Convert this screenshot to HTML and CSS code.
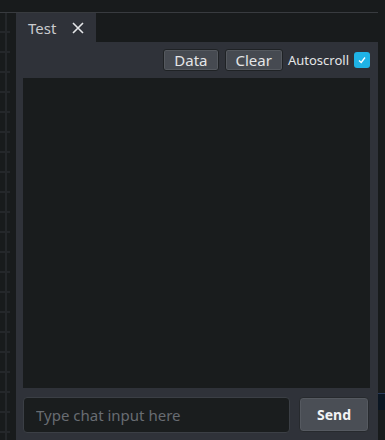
FILE: index.html
```html
<!DOCTYPE html>
<html lang="en">
<head>
    <meta charset="UTF-8">
    <meta name="viewport" content="width=device-width, initial-scale=1.0">
    <title>Test</title>
    <link rel="stylesheet" href="styles.css">
</head>
<body>
    <div class="topline"></div>
    <div class="workspace">
        <div class="ruler"></div>
        <div class="panel">
            <div class="tabbar">
                <div class="tab">
                    <span class="tab-title">Test</span>
                    <svg class="tab-close" width="12" height="12" viewBox="0 0 12 12">
                        <path d="M1 1 L11 11 M11 1 L1 11" stroke="#e4e6e8" stroke-width="1.6" fill="none"/>
                    </svg>
                </div>
            </div>
            <div class="panel-body">
                <div class="toolbar">
                    <button class="btn">Data</button>
                    <button class="btn">Clear</button>
                    <label class="autoscroll">Autoscroll
                        <span class="check">
                            <svg width="10" height="10" viewBox="0 0 10 10">
                                <path d="M2 5.5 L4.2 7.5 L8 2.5" stroke="#ffffff" stroke-width="1.3" fill="none"/>
                            </svg>
                        </span>
                    </label>
                </div>
                <div class="output"></div>
                <div class="inputrow">
                    <input class="chat-input" type="text" placeholder="Type chat input here">
                    <button class="send">Send</button>
                </div>
            </div>
        </div>
        <div class="rightedge">
            <div class="bluestrip"></div>
        </div>
    </div>
</body>
</html>
```

FILE: styles.css
```css
html, body {
    margin: 0;
    padding: 0;
    height: 100%;
}
body {
    background-color: #181b1c;
    font-family: "Noto Sans", Arial, sans-serif;
    overflow: hidden;
}
.topline {
    height: 12px;
    width: 378px;
    border-bottom: 1px solid #383b3f;
}
.workspace {
    display: flex;
    height: 427px;
}
.ruler {
    width: 16px;
    flex-shrink: 0;
    background-image:
        linear-gradient(#24272a, #24272a),
        repeating-linear-gradient(to bottom, transparent 0, transparent 18px, #24272a 18px, #24272a 20px);
    background-size: 2px 100%, 10px 100%;
    background-position: 5px 0, 0 0;
    background-repeat: no-repeat;
}
.panel {
    width: 362px;
    display: flex;
    flex-direction: column;
}
.tabbar {
    display: flex;
    height: 29px;
}
.tab {
    width: 80px;
    background-color: #2f3239;
    display: flex;
    align-items: center;
    padding-left: 12px;
    box-sizing: border-box;
}
.tab-title {
    color: #c9cbce;
    font-size: 15px;
}
.tab-close {
    margin-left: 16px;
}
.panel-body {
    flex: 1;
    background-color: #2f3239;
    padding: 7px 8px 0 7px;
    display: flex;
    flex-direction: column;
}
.toolbar {
    display: flex;
    justify-content: flex-end;
    align-items: center;
    gap: 6px;
    height: 22px;
    margin-bottom: 7px;
}
.btn {
    height: 22px;
    padding: 0 10px;
    background-color: #464a51;
    border: 1px solid #1f2225;
    box-shadow: inset 0 0 0 1px #55595f;
    border-radius: 3px;
    color: #e4e5e7;
    font-family: "Noto Sans", Arial, sans-serif;
    font-size: 15px;
    line-height: 20px;
}
.autoscroll {
    display: flex;
    align-items: center;
    gap: 5px;
    color: #e4e5e7;
    font-size: 13px;
    margin-left: -1px;
}
.check {
    width: 16px;
    height: 16px;
    background-color: #1fb3e6;
    border-radius: 3px;
    display: flex;
    align-items: center;
    justify-content: center;
}
.output {
    height: 310px;
    background-color: #191c1d;
}
.inputrow {
    display: flex;
    gap: 9px;
    margin-top: 9px;
}
.chat-input {
    width: 267px;
    height: 36px;
    box-sizing: border-box;
    background-color: #1a1d1e;
    border: 1px solid #3b3f45;
    border-radius: 4px;
    padding: 0 12px;
    color: #e4e5e7;
    font-family: "Noto Sans", Arial, sans-serif;
    font-size: 15px;
    outline: none;
}
.chat-input::placeholder {
    color: #686c72;
}
.send {
    width: 70px;
    height: 35px;
    background-color: #4a4e55;
    border: 1px solid #272a2e;
    box-shadow: inset 0 0 0 1px #555960;
    border-radius: 4px;
    color: #f2f3f4;
    font-family: "Noto Sans", Arial, sans-serif;
    font-weight: bold;
    font-size: 14px;
}
.rightedge {
    width: 7px;
}
.bluestrip {
    margin-top: 380px;
    height: 16px;
    background-color: #0b1622;
    border-top: 1px solid #2a3a5a;
}
```
